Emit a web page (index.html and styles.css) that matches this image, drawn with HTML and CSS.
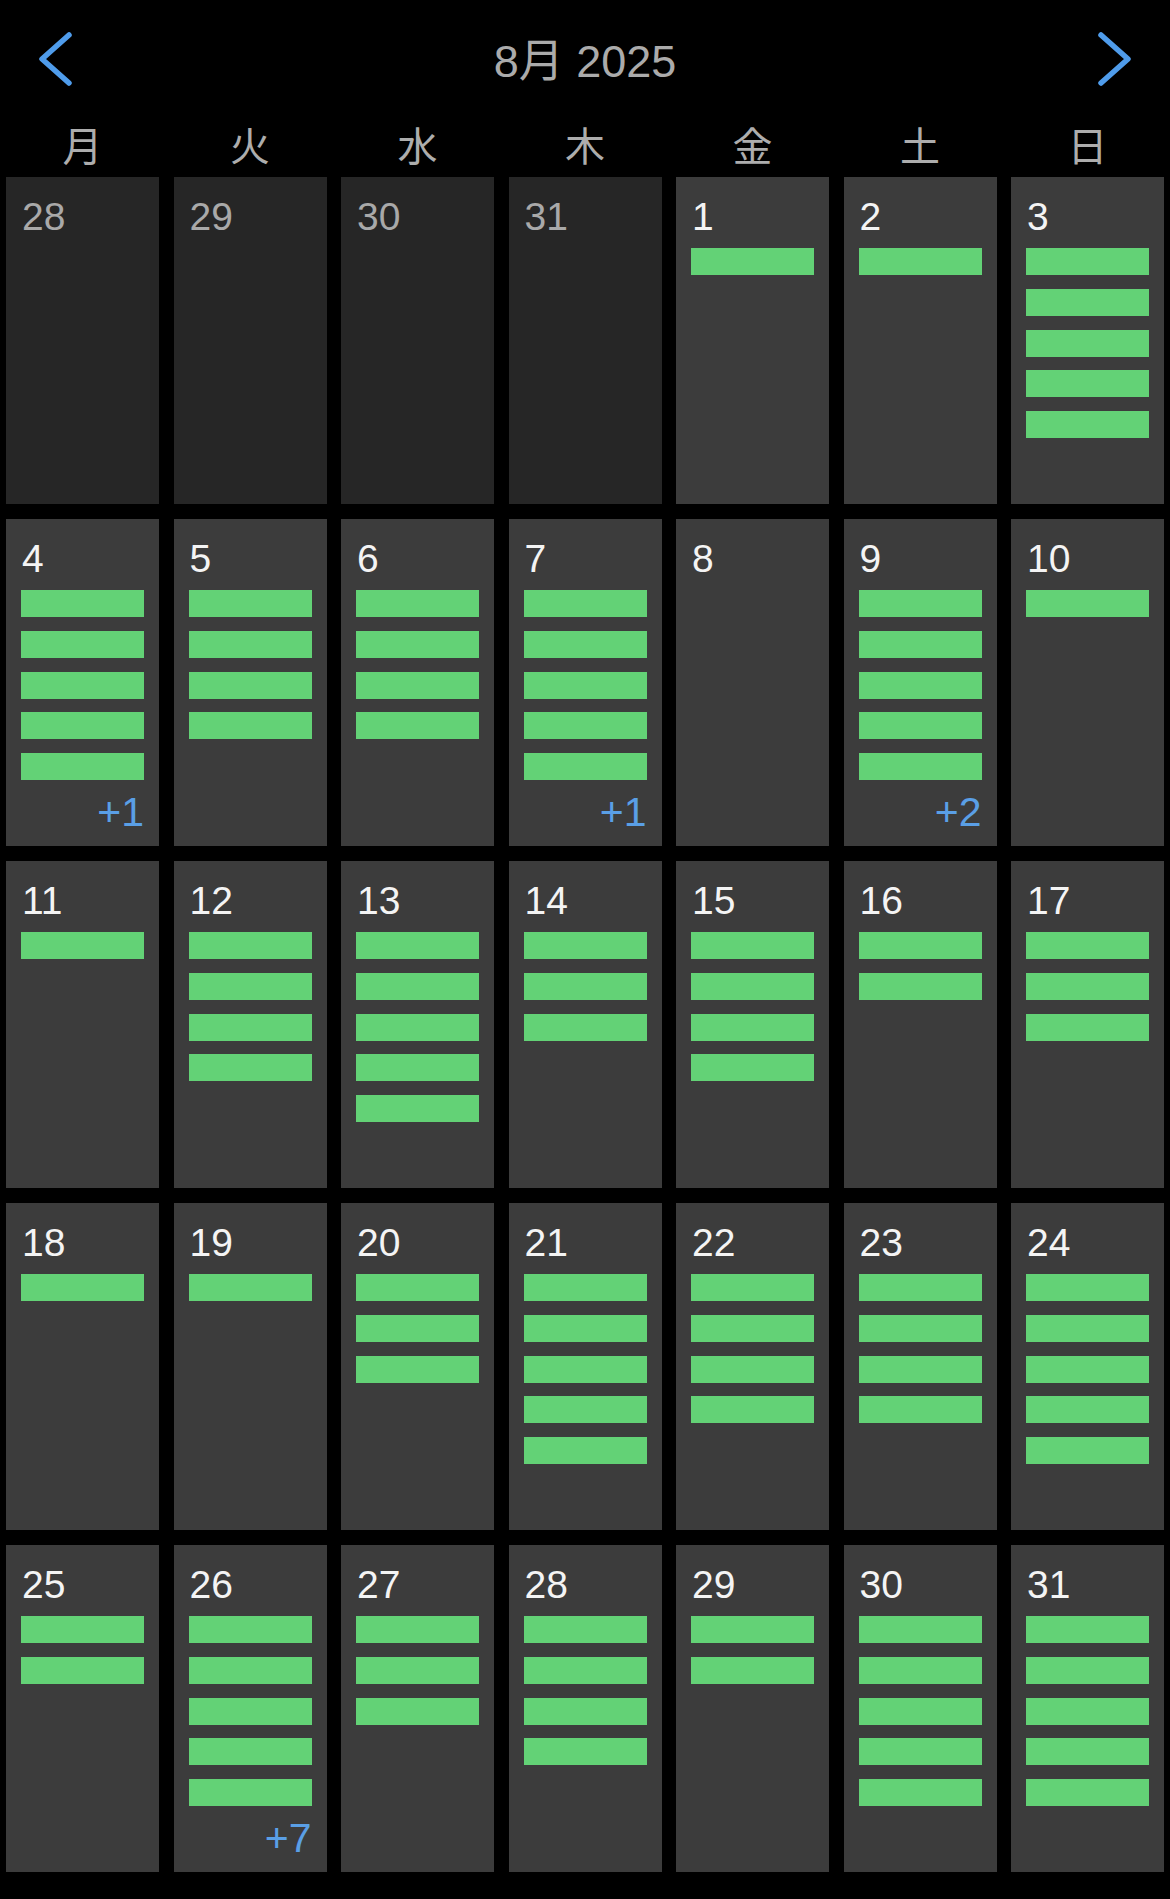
FILE: index.html
```html
<!DOCTYPE html>
<html lang="ja">
<head>
<meta charset="utf-8">
<title>8月 2025</title>
<link rel="stylesheet" href="styles.css">
</head>
<body>
<div class="app">
  <header class="header">
    <svg class="chev" width="40" height="56" viewBox="0 0 40 56"><polyline points="33,4 6,28 33,52" /></svg>
    <div class="title">8月 2025</div>
    <svg class="chev" width="40" height="56" viewBox="0 0 40 56"><polyline points="7,4 34,28 7,52" /></svg>
  </header>
  <div class="weekdays">
    <div class="wd">月</div><div class="wd">火</div><div class="wd">水</div><div class="wd">木</div><div class="wd">金</div><div class="wd">土</div><div class="wd">日</div>
  </div>
  <div class="grid">
    <div class="cell other"><div class="num">28</div></div>
    <div class="cell other"><div class="num">29</div></div>
    <div class="cell other"><div class="num">30</div></div>
    <div class="cell other"><div class="num">31</div></div>
    <div class="cell"><div class="num">1</div><div class="bars"><i></i></div></div>
    <div class="cell"><div class="num">2</div><div class="bars"><i></i></div></div>
    <div class="cell"><div class="num">3</div><div class="bars"><i></i><i></i><i></i><i></i><i></i></div></div>

    <div class="cell"><div class="num">4</div><div class="bars"><i></i><i></i><i></i><i></i><i></i></div><div class="more">+1</div></div>
    <div class="cell"><div class="num">5</div><div class="bars"><i></i><i></i><i></i><i></i></div></div>
    <div class="cell"><div class="num">6</div><div class="bars"><i></i><i></i><i></i><i></i></div></div>
    <div class="cell"><div class="num">7</div><div class="bars"><i></i><i></i><i></i><i></i><i></i></div><div class="more">+1</div></div>
    <div class="cell"><div class="num">8</div></div>
    <div class="cell"><div class="num">9</div><div class="bars"><i></i><i></i><i></i><i></i><i></i></div><div class="more">+2</div></div>
    <div class="cell"><div class="num">10</div><div class="bars"><i></i></div></div>

    <div class="cell"><div class="num">11</div><div class="bars"><i></i></div></div>
    <div class="cell"><div class="num">12</div><div class="bars"><i></i><i></i><i></i><i></i></div></div>
    <div class="cell"><div class="num">13</div><div class="bars"><i></i><i></i><i></i><i></i><i></i></div></div>
    <div class="cell"><div class="num">14</div><div class="bars"><i></i><i></i><i></i></div></div>
    <div class="cell"><div class="num">15</div><div class="bars"><i></i><i></i><i></i><i></i></div></div>
    <div class="cell"><div class="num">16</div><div class="bars"><i></i><i></i></div></div>
    <div class="cell"><div class="num">17</div><div class="bars"><i></i><i></i><i></i></div></div>

    <div class="cell"><div class="num">18</div><div class="bars"><i></i></div></div>
    <div class="cell"><div class="num">19</div><div class="bars"><i></i></div></div>
    <div class="cell"><div class="num">20</div><div class="bars"><i></i><i></i><i></i></div></div>
    <div class="cell"><div class="num">21</div><div class="bars"><i></i><i></i><i></i><i></i><i></i></div></div>
    <div class="cell"><div class="num">22</div><div class="bars"><i></i><i></i><i></i><i></i></div></div>
    <div class="cell"><div class="num">23</div><div class="bars"><i></i><i></i><i></i><i></i></div></div>
    <div class="cell"><div class="num">24</div><div class="bars"><i></i><i></i><i></i><i></i><i></i></div></div>

    <div class="cell"><div class="num">25</div><div class="bars"><i></i><i></i></div></div>
    <div class="cell"><div class="num">26</div><div class="bars"><i></i><i></i><i></i><i></i><i></i></div><div class="more">+7</div></div>
    <div class="cell"><div class="num">27</div><div class="bars"><i></i><i></i><i></i></div></div>
    <div class="cell"><div class="num">28</div><div class="bars"><i></i><i></i><i></i><i></i></div></div>
    <div class="cell"><div class="num">29</div><div class="bars"><i></i><i></i></div></div>
    <div class="cell"><div class="num">30</div><div class="bars"><i></i><i></i><i></i><i></i><i></i></div></div>
    <div class="cell"><div class="num">31</div><div class="bars"><i></i><i></i><i></i><i></i><i></i></div></div>
  </div>
</div>
</body>
</html>
```

FILE: styles.css
```css
html, body {
  margin: 0;
  padding: 0;
  background: #000;
}
body {
  width: 1170px;
  height: 1899px;
  overflow: hidden;
  font-family: "Liberation Sans", "Noto Sans CJK JP", sans-serif;
  color: #fff;
}
.app {
  display: flex;
  flex-direction: column;
}
.header {
  height: 100px;
  display: flex;
  justify-content: space-between;
  align-items: flex-start;
  padding: 0 36px;
}
.chev {
  margin-top: 31px;
  display: block;
}
.chev polyline {
  fill: none;
  stroke: #4f9ceb;
  stroke-width: 5.5;
  stroke-linecap: round;
  stroke-linejoin: round;
}
.title {
  padding-top: 39px;
  font-size: 45px;
  line-height: 45px;
  color: #ababab;
}
.weekdays {
  height: 77px;
  display: grid;
  grid-template-columns: repeat(7, 1fr);
  column-gap: 14.5px;
  padding: 0 6px;
}
.wd {
  font-family: "Noto Sans CJK JP", sans-serif;
  font-size: 40px;
  line-height: 40px;
  padding-top: 24px;
  text-align: center;
  color: #adadad;
}
.grid {
  display: grid;
  grid-template-columns: repeat(7, 1fr);
  grid-auto-rows: 327px;
  column-gap: 14.5px;
  row-gap: 15px;
  padding: 0 6px;
}
.cell {
  background: #3c3c3c;
  display: flex;
  flex-direction: column;
  padding: 20px 15px 13px 15px;
  box-sizing: border-box;
}
.cell.other {
  background: #262626;
}
.num {
  font-size: 39px;
  line-height: 39px;
  padding-left: 1px;
  color: #f4f4f4;
}
.cell.other .num {
  color: #a9a9a9;
}
.bars {
  margin-top: 12px;
  display: flex;
  flex-direction: column;
  gap: 13.75px;
}
.bars i {
  display: block;
  height: 27px;
  background: #63d276;
}
.more {
  margin-top: auto;
  text-align: right;
  font-size: 41px;
  line-height: 41px;
  color: #5a9fe6;
}
```
